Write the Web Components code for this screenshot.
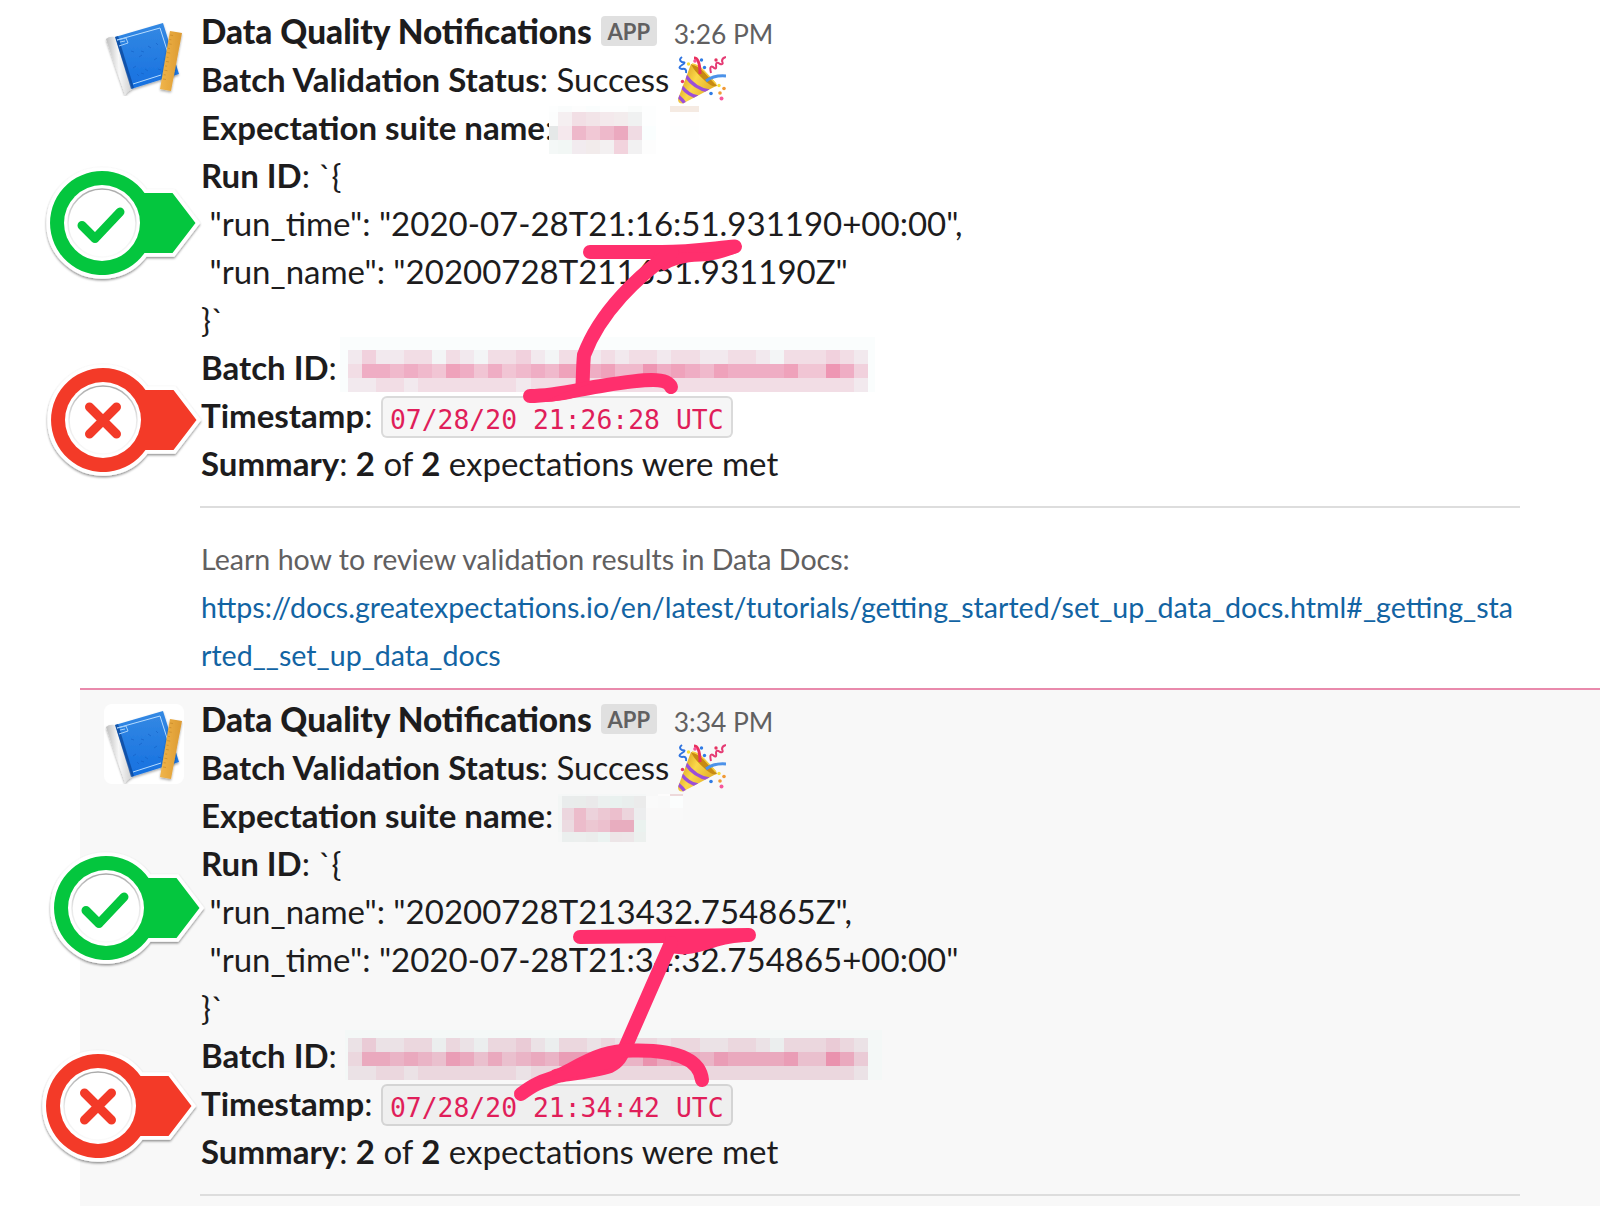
<!DOCTYPE html>
<html lang="en">
<head>
<meta charset="utf-8">
<title>Data Quality Notifications</title>
<style>
  html, body {
    margin: 0;
    background: #fff;
  }
  body {
    position: relative;
    width: 1600px;
    height: 1206px;
    overflow: hidden;
    font-family: Lato, "Liberation Sans", sans-serif;
    color: #1d1c1d;
  }
  .mark { position: absolute; }
</style>
</head>
<body>
<message-list>
  <slack-message author="Data Quality Notifications" time="3:26 PM">
    <message-line><b>Batch Validation Status</b>: Success<party-emoji></party-emoji></message-line>
    <message-line><b>Expectation suite name</b>:</message-line>
    <message-line><b>Run ID</b>: `{</message-line>
    <message-line> "run_time": "2020-07-28T21:16:51.931190+00:00",</message-line>
    <message-line> "run_name": "20200728T211651.931190Z"</message-line>
    <message-line>}`</message-line>
    <message-line><b>Batch ID</b>:</message-line>
    <message-line><b>Timestamp</b>: <code-chip>07/28/20 21:26:28 UTC</code-chip></message-line>
    <message-line><b>Summary</b>: <b>2</b> of <b>2</b> expectations were met</message-line>
    <docs-context slot="context" href="https://docs.greatexpectations.io/en/latest/tutorials/getting_started/set_up_data_docs.html#_getting_started__set_up_data_docs">Learn how to review validation results in Data Docs:</docs-context>
  </slack-message>

  <slack-message highlighted author="Data Quality Notifications" time="3:34 PM">
    <message-line><b>Batch Validation Status</b>: Success<party-emoji></party-emoji></message-line>
    <message-line><b>Expectation suite name</b>:</message-line>
    <message-line><b>Run ID</b>: `{</message-line>
    <message-line> "run_name": "20200728T213432.754865Z",</message-line>
    <message-line> "run_time": "2020-07-28T21:34:32.754865+00:00"</message-line>
    <message-line>}`</message-line>
    <message-line><b>Batch ID</b>:</message-line>
    <message-line><b>Timestamp</b>: <code-chip>07/28/20 21:34:42 UTC</code-chip></message-line>
    <message-line><b>Summary</b>: <b>2</b> of <b>2</b> expectations were met</message-line>
  </slack-message>
</message-list>

<!-- redactions -->
<pixel-mosaic class="mark" style="left:549px;top:106px" cols="9 14 14 14 14 14 14 14 14 29" rows="6 14 14 14"
  colors="fdfefe fafcfc fdfdfd fafdfd fdfefe fdfefe fafcfb fdfefe transparent f5eae2
          fcfdfd f5eff1 f2dfe5 f2e4e8 f4e9ec f3eced f0f1f1 fdfefe ffffff fffefe
          e5e8e8 f5e8ed eeb8ca f1c8d5 eeb9cb eba9bf f0dbe3 fafefe ffffff fefefe
          f4f8f7 f2f7f5 f2ebef f2ebeb f3f0f1 f2d3dd f2f1f2 fdfdfd ffffff ffffff"></pixel-mosaic>
<pixel-mosaic class="mark" style="left:558px;top:794px" cols="4 12 12 12 12 12 12 12 12 12 13" rows="2 12 12 12 10"
  colors="f5f7f7 f5f7f7 f5f7f7 f5f7f7 f5f7f7 f5f7f7 f5f7f7 f5f7f7 f8f8f8 fdfcfc edd9db
          f3f6f5 e9ecec e9eceb eae9ea ebf0ef e9f1ef e9eeed ebebeb fafafa f9f9f9 fbfdfd
          f3f6f5 ecd6de ecbccb ecd2db ecc8d3 ecbfcd ecd4dc ecedee f9f8f8 f9f8f8 f9f9f9
          f3f6f5 ecdbe1 ecbccb ecc7d2 ecc0ce e8adbf e8adbf eaf2ef f8f8f8 f8f8f8 f8f8f8
          f6f7f7 ebefee ecefee ebedec ebf3f1 ede5e7 ede6e8 ecf0ee f8f8f8 f8f8f8 f8f8f8"></pixel-mosaic>
<batch-mosaic class="mark" style="left:340px;top:337px" head="13" base="f3f5f6"></batch-mosaic>
<batch-mosaic class="mark" style="left:345px;top:1030px" head="8" base="ebeeee" second></batch-mosaic>

<!-- pointers in the left gutter -->
<stamp-pointer class="mark" kind="ok" style="left:36px;top:157px"></stamp-pointer>
<stamp-pointer class="mark" kind="bad" style="left:37px;top:354px"></stamp-pointer>
<stamp-pointer class="mark" kind="ok" style="left:40px;top:842px"></stamp-pointer>
<stamp-pointer class="mark" kind="bad" style="left:32px;top:1040px"></stamp-pointer>

<marker-strokes class="mark" style="left:500px;top:230px"></marker-strokes>

<script>
class MessageList extends HTMLElement {
  constructor() {
    super();
    this.attachShadow({ mode: 'open' }).innerHTML = `
      <style>
        :host { display: flex; flex-direction: column; height: 1206px; padding-left: 80px; box-sizing: border-box; overflow: hidden; }
      </style>
      <slot></slot>
    `;
  }
}

class SlackMessage extends HTMLElement {
  constructor() {
    super();
    const shadow = this.attachShadow({ mode: 'open' });
    shadow.innerHTML = `
      <style>
        :host {
          display: flex;
          flex: none;
          gap: 16px;
          box-sizing: border-box;
          height: 688px;
          padding: 7px 80px 0 24px;
        }
        :host([highlighted]) {
          height: 518px;
          background: #f8f8f8;
          border-top: 2px solid #e98aac;
          padding-top: 5px;
        }
        book-avatar { margin-top: 9px; }
        .body { flex: 1; min-width: 0; }
        .header {
          display: flex;
          align-items: baseline;
          height: 48px;
          padding-left: 1px;
          line-height: 48px;
        }
        .author { font-size: 33.35px; font-weight: 900; }
        .badge {
          align-self: flex-start;
          margin: 9px 0 0 9px;
          width: 56px;
          height: 30px;
          line-height: 31px;
          border-radius: 4px;
          background: #e0e0e0;
          color: #616061;
          font-size: 22px;
          font-weight: 700;
          text-align: center;
        }
        .time { margin-left: 17px; font-size: 26.4px; color: #616061; }
        hr {
          height: 2px;
          margin: 19px 0 27px;
          border: 0;
          background: #dddddd;
        }
      </style>
      <book-avatar></book-avatar>
      <div class="body">
        <div class="header">
          <span class="author"></span>
          <span class="badge">APP</span>
          <span class="time"></span>
        </div>
        <slot></slot>
        <hr>
        <slot name="context"></slot>
      </div>
    `;
  }

  connectedCallback() {
    this.shadowRoot.querySelector('.author').textContent = this.getAttribute('author');
    this.shadowRoot.querySelector('.time').textContent = this.getAttribute('time');
  }
}

class MessageLine extends HTMLElement {
  constructor() {
    super();
    this.attachShadow({ mode: 'open' }).innerHTML = `
      <style>
        :host {
          display: block;
          height: 48px;
          padding-left: 1px;
          font-size: 33px;
          line-height: 48px;
        }
        /* keeps the leading space of the JSON lines */
        slot { white-space: pre; }
        ::slotted(b) { font-weight: 700; }
      </style>
      <slot></slot>
    `;
  }
}

class CodeChip extends HTMLElement {
  constructor() {
    super();
    this.attachShadow({ mode: 'open' }).innerHTML = `
      <style>
        :host {
          display: inline-block;
          box-sizing: border-box;
          height: 42px;
          padding: 0 7px;
          border: 2px solid rgba(29, 28, 29, 0.13);
          border-radius: 6px;
          background: rgba(29, 28, 29, 0.04);
          color: #e01e5a;
          font: 26.4px/43px "DejaVu Sans Mono", monospace;
          white-space: nowrap;
          vertical-align: top;
          margin-top: 5px;
        }
      </style>
      <slot></slot>
    `;
  }
}

class DocsContext extends HTMLElement {
  constructor() {
    super();
    this.attachShadow({ mode: 'open' }).innerHTML = `
      <style>
        :host { display: block; padding-left: 1px; font-size: 28.6px; line-height: 48px; color: #616061; }
        a { display: block; color: #1264a3; text-decoration: none; word-break: break-all; }
      </style>
      <slot></slot>
      <a></a>
    `;
  }

  connectedCallback() {
    const link = this.shadowRoot.querySelector('a');
    link.href = this.getAttribute('href');
    link.textContent = this.getAttribute('href');
  }
}

class BookAvatar extends HTMLElement {
  constructor() {
    super();
    this.attachShadow({ mode: 'open' }).innerHTML = `
      <style>
        :host { display: block; width: 80px; height: 80px; border-radius: 8px; background: #fff; overflow: hidden; }
        svg { display: block; }
      </style>
      <svg width="80" height="80" viewBox="0 0 80 80">
        <defs>
          <linearGradient id="cover" x1="0" y1="0" x2="0" y2="1">
            <stop offset="0" stop-color="#3489e3"/><stop offset="1" stop-color="#1670e0"/>
          </linearGradient>
          <linearGradient id="spine" x1="0" y1="0.1" x2="1" y2="0">
            <stop offset="0" stop-color="#bdbdbd"/><stop offset=".45" stop-color="#f7f7f7"/><stop offset="1" stop-color="#c9c9c9"/>
          </linearGradient>
          <linearGradient id="ruler" x1="0" y1="0" x2="1" y2="0">
            <stop offset="0" stop-color="#f0b54a"/><stop offset="1" stop-color="#dc9a32"/>
          </linearGradient>
          <filter id="soft" x="-20%" y="-20%" width="140%" height="140%">
            <feDropShadow dx="0" dy="1.5" stdDeviation="1.2" flood-opacity=".35"/>
          </filter>
        </defs>
        <g filter="url(#soft)">
          <path d="M11 21 59 7 75 58 27 73Z" fill="url(#cover)"/>
          <path d="M2 23Q5 20 11 21L28 73Q24 75 21 79Z" fill="url(#spine)"/>
        </g>
        <path d="M11 21 14 20 30 72 27 73Z" fill="#0b4698" opacity=".75"/>
        <path d="M13 24 56 12 70 56M29 68 57 59" fill="none" stroke="#b7dcff" stroke-width="1"/>
        <path d="M13 24 22 22 24 27 15 30M16 26l5-1" fill="none" stroke="#a5cff8" stroke-width="1"/>
        <path d="M27 35l3 1m5 5 3-2m6-9 3 2m-18 20 3-2m9 3 3 2m-7-20 3 1m12-9 2 2m-1 13-3 2m-13 13 3 1m14-5 3 1m-24 4 2 2" stroke="#145fc4" stroke-width="1" opacity=".6"/>
        <g filter="url(#soft)">
          <path d="M66 15 78 17 67 75 56 73Z" fill="url(#ruler)"/>
        </g>
        <path d="M66 19l3 .5m-3.7 4 2 .3m-2.7 4 3 .5m-3.7 4 2 .3m-2.7 4 3 .5m-3.7 4 2 .3m-2.7 4 3 .5m-3.7 4 2 .3m-2.7 4 3 .5m-3.7 4 2 .3m-2.7 4 3 .5" stroke="#b87a20" stroke-width=".8" opacity=".6"/>
      </svg>
    `;
  }
}

class PartyEmoji extends HTMLElement {
  constructor() {
    super();
    this.attachShadow({ mode: 'open' }).innerHTML = `
      <style>
        :host { display: inline-block; width: 48px; height: 48px; margin-left: 9px; vertical-align: top; white-space: normal; }
        svg { display: block; margin-top: 1px; }
      </style>
      <svg width="48" height="48" viewBox="0 0 48 48">
        <defs>
          <linearGradient id="cone" x1="0" y1=".3" x2="1" y2=".8">
            <stop offset="0" stop-color="#d79a1c"/><stop offset=".4" stop-color="#fbd84a"/><stop offset="1" stop-color="#dca421"/>
          </linearGradient>
          <clipPath id="body"><path d="M13 8 0 43Q0 48 5 47.500L38 30Z"/></clipPath>
        </defs>
        <path d="M13 8 0 43Q0 48 5 47.500L38 30Z" fill="url(#cone)"/>
        <g clip-path="url(#body)" fill="none" stroke="#9b4fd8" stroke-width="3.500">
          <path d="M7 19Q17 33 31 35"/><path d="M3 30Q11 40 20 41"/><path d="M-1 39Q5 44 8 49"/>
        </g>
        <path d="M13 8Q18 8 27 16 38 26 39 30 34 32 25 23 16 15 13 8Z" fill="#c78a12"/>
        <path d="M14 8Q20 9 26 15L38 28" fill="none" stroke="#f6cf3f" stroke-width="1.500"/>
        <path d="M16 2Q22 2 22 18" fill="none" stroke="#e9305d" stroke-width="3"/>
        <path d="M28 25Q36 19 48 20" fill="none" stroke="#4c92e9" stroke-width="3"/>
        <path d="M4 1Q0 4 4 6 9 6 4 9-1 12 4 13 9 12 8 17" fill="none" stroke="#2f74e0" stroke-width="2"/>
        <path d="M33 17Q31 9 35 11 39 15 38 9 38 5 42 8 46 9 44 5 44 2 48 1" fill="none" stroke="#e53b74" stroke-width="2"/>
        <g fill="#f6579c"><circle cx="17" cy="5" r="1.800"/><circle cx="43.500" cy="42.500" r="2"/></g>
        <g fill="#e53462"><circle cx="38" cy="4" r="1.700"/><circle cx="4.500" cy="25.500" r="1.700"/></g>
        <g fill="#2f7be5"><circle cx="23.500" cy="4" r="1.700"/><circle cx="26.500" cy="11.500" r="1.700"/><circle cx="33" cy="37.500" r="1.800"/></g>
        <g fill="#f9df35"><circle cx="10.500" cy="8" r="1.700"/><circle cx="41" cy="29.500" r="1.700"/></g>
        <g fill="#f09a35"><circle cx="46" cy="32.500" r="1.800"/><circle cx="42" cy="37" r="1.800"/></g>
      </svg>
    `;
  }
}

// grid of flat cells; cols and rows hold the track sizes in pixels
class PixelMosaic extends HTMLElement {
  constructor() {
    super();
    this.attachShadow({ mode: 'open' });
  }

  connectedCallback() {
    this.draw(
      this.getAttribute('cols').split(' '),
      this.getAttribute('rows').split(' '),
      this.getAttribute('colors').trim().split(/\s+/)
    );
  }

  draw(cols, rows, colors) {
    this.shadowRoot.innerHTML = `
      <style>
        :host {
          display: grid;
          grid-template-columns: ${cols.map(c => c + 'px').join(' ')};
          grid-template-rows: ${rows.map(r => r + 'px').join(' ')};
        }
      </style>
      ${colors.map(c => `<i style="background:${c.length === 6 ? '#' + c : c}"></i>`).join('')}
    `;
  }
}

// the long strip: every digit is how strongly pink tints a 14px cell
class BatchMosaic extends PixelMosaic {
  connectedCallback() {
    const second = this.hasAttribute('second');
    const base = '#' + this.getAttribute('base');
    const faint = second ? '#f4f8f7' : '#fafdfd';
    const edge = second ? 3 : 8;
    const strips = [
      '1311220210223102212122122112210222321',
      '2665654764645657767558676576666744863',
      '1122122222221222222222222222222222221'
    ];
    const colors = Array(39).fill(faint);
    strips.forEach(strip => {
      colors.push(faint);
      for (const d of strip) {
        colors.push(`color-mix(in srgb, #e82060 ${d * 5.6}%, ${base})`);
      }
      colors.push(faint);
    });
    // two cells are a pixel wider, which keeps the pitch just above 14
    const cells = Array.from({ length: 37 }, (_, i) => (i === 12 || i === 24 ? 15 : 14));
    this.draw([edge, ...cells, second ? 14 : 7], [this.getAttribute('head'), 14, 14, 14], colors);
  }
}

class StampPointer extends HTMLElement {
  constructor() {
    super();
    this.attachShadow({ mode: 'open' });
  }

  connectedCallback() {
    const ok = this.getAttribute('kind') === 'ok';
    const color = ok ? '#04c63e' : '#f33a28';
    const glyph = ok ? 'M46 68.500 59 81.500 84 55' : 'M52.500 53 79.500 80M79.500 53 52.500 80';
    this.shadowRoot.innerHTML = `
      <style>
        :host { display: block; width: 170px; height: 132px; }
        svg { display: block; }
      </style>
      <svg width="170" height="132" viewBox="0 0 170 132">
        <defs>
          <filter id="drop" x="-10%" y="-10%" width="120%" height="120%">
            <feDropShadow dx="0" dy="1.500" stdDeviation="1" flood-opacity=".45"/>
          </filter>
          <linearGradient id="rim" x1="0" y1="0" x2="0" y2="1">
            <stop offset="0" stop-color="#aaa"/><stop offset=".5" stop-color="#e8e8e8"/><stop offset="1" stop-color="#fafafa"/>
          </linearGradient>
        </defs>
        <g filter="url(#drop)">
          <path d="M108.500 36H136.500L159.500 66 136.500 96H108.500A52 52 0 1 1 108.500 36Z" fill="#fff" stroke="#fff" stroke-width="7.500"/>
        </g>
        <path d="M108.500 36H136.500L159.500 66 136.500 96H108.500A52 52 0 1 1 108.500 36Z" fill="${color}"/>
        <circle cx="66" cy="66" r="38" fill="#fff"/>
        <circle cx="66" cy="66" r="34" fill="#fff" stroke="url(#rim)" stroke-width="1.500"/>
        <path d="${glyph}" fill="none" stroke="${color}" stroke-width="9" stroke-linecap="round" stroke-linejoin="round"/>
      </svg>
    `;
  }
}

class MarkerStrokes extends HTMLElement {
  constructor() {
    super();
    this.attachShadow({ mode: 'open' }).innerHTML = `
      <style>
        :host { display: block; width: 280px; height: 890px; }
        svg { display: block; fill: none; stroke: #ff2f6d; stroke-width: 14; stroke-linecap: round; stroke-linejoin: round; }
        .fill { fill: #ff2f6d; stroke: none; }
      </style>
      <svg width="280" height="890" viewBox="500 230 280 890">
        <path d="M590 252H662C690 252 712 248.500 735 246.500"/>
        <path class="fill" d="M655 252 738 252.500C722 259 712 261 700 261.500 684 262 674 265 664 271L652 262Z"/>
        <path d="M672 252C638 276 600 312 584 355 583 364 583 375 582.500 386"/>
        <path d="M530 396C556 396 580 389 604 385.500 645 379 667 377 671 387"/>
        <path class="fill" d="M545 402C565 401 575 398 590 392V384L560 394Z"/>

        <path d="M580 937 749 935"/>
        <path class="fill" d="M665 935H749V942C720 942 706 953 684 954.500L668 953Z"/>
        <path d="M671 943 625 1048C620 1058 618 1062 610 1066 595 1071 575 1073 556 1076"/>
        <path d="M521 1094C545 1076 548 1083 570 1070 595 1056 610 1050 635 1050.500 680 1050 700 1061 702 1080"/>
        <path class="fill" d="M545 1080 590 1056H625L612 1068 545 1085Z"/>
      </svg>
    `;
  }
}

customElements.define('message-list', MessageList);
customElements.define('slack-message', SlackMessage);
customElements.define('message-line', MessageLine);
customElements.define('code-chip', CodeChip);
customElements.define('docs-context', DocsContext);
customElements.define('book-avatar', BookAvatar);
customElements.define('party-emoji', PartyEmoji);
customElements.define('pixel-mosaic', PixelMosaic);
customElements.define('batch-mosaic', BatchMosaic);
customElements.define('stamp-pointer', StampPointer);
customElements.define('marker-strokes', MarkerStrokes);
</script>
</body>
</html>
